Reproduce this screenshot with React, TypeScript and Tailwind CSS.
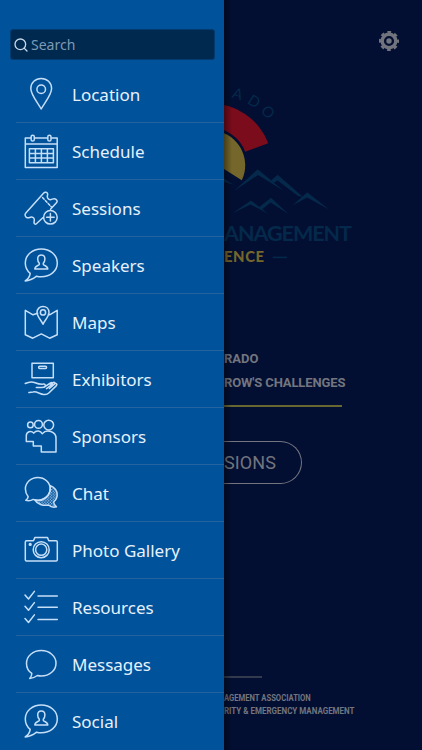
import type { ReactNode } from 'react'
import { Search } from 'lucide-react'

const BUBBLE = 'M7.2 26.4C4 23.8 2.3 20.2 2.3 16 2.3 8 9.4 2 18.3 2s16 6 16 14-7.100 13.800-16 13.800c-1.600 0-3.200-.200-4.700-.600C10.600 31.600 6.500 33.800 2.200 34c2.800-1.800 4.600-4.200 5-7.600z'
const PERSON = 'M16.300 16.200c-1-1.200-1.600-2.600-1.600-4.300 0-2.400 1.400-4 3.600-4s3.600 1.600 3.600 4c0 1.700-.6 3.100-1.600 4.300v1.300c0 .8 4.500.9 4.500 4.600h-13c0-3.700 4.500-3.800 4.500-4.600z'

function SpeakerIcon() {
  return (
    <>
      <path d={BUBBLE} />
      <path d={PERSON} />
    </>
  )
}

function CheckRow({ y }: { y: number }) {
  return <path d={`M2 ${y - 1}l3.500 4L11.400 ${y - 4.6}M15 ${y}h19.300`} />
}

const items: { label: string; icon: ReactNode }[] = [
  {
    label: 'Location',
    icon: (
      <>
        <path d="M18.200 33C15 27 7.800 18.800 7.800 12.500 7.800 6.600 12.400 2.500 18.200 2.500s10.400 4.100 10.400 10C28.600 18.800 21.400 27 18.200 33z" />
        <circle cx="18.200" cy="13.200" r="4.300" />
      </>
    ),
  },
  {
    label: 'Schedule',
    icon: (
      <>
        <path d="M7.800 5H2.300v29.600h31.900V5h-5.500M11.600 5h12.900M2.300 11.100h31.900" />
        <rect x="8.100" y="2.200" width="3.200" height="5.800" rx="1.600" />
        <rect x="24.800" y="2.200" width="3.200" height="5.800" rx="1.600" />
        <path d="M6.400 15.800h24v14h-24zM12.400 15.800v14M18.400 15.800v14M24.400 15.800v14M6.400 20.500h24M6.400 25.100h24" />
      </>
    ),
  },
  {
    label: 'Sessions',
    icon: (
      <>
        <path d="M19.800 27.800l-6.400 6c-.8.7-2 .3-2.300-.7-.3-1.200.4-2.300.2-3.600-.3-1.900-2.200-2.800-3.900-2.300-1.200.4-2.200 1-3.300.5-1.800-.8-2.700-3.200-1.500-4.400L20.500 3.200c1.100-1.100 3-1.300 3.900-.1.800 1.100-.2 2.300-.1 3.700.1 1.900 1.900 3.200 3.800 2.800 1.300-.3 2.200-1.300 3.600-.8 1.900.6 3.200 2.400 2 3.600l-6.200 6.800" />
        <path d="M19.500 7.500l9 9.500" strokeDasharray="2.400 1.700" />
        <circle cx="27.400" cy="27.300" r="6.800" />
        <path d="M27.400 23.500v7.600M23.600 27.300h7.600" />
      </>
    ),
  },
  { label: 'Speakers', icon: <SpeakerIcon /> },
  {
    label: 'Maps',
    icon: (
      <>
        <path d="M14.700 9.200l-4.700 1.600-7.700-4.500v24.400l7.500 3.500 8.500-4.300 8.300 4.300 7.600-3.500V6.300l-7.600 4.500-1.200-.6" />
        <path d="M20 20.300c-1.500-3.800-6-7.900-6-11.800 0-3.600 2.600-6.100 6-6.100s6 2.500 6 6.100c0 3.900-4.500 8-6 11.800z" />
        <circle cx="20" cy="8.400" r="2.600" />
      </>
    ),
  },
  {
    label: 'Exhibitors',
    icon: (
      <>
        <rect x="9" y="2.300" width="21.300" height="14.400" />
        <rect x="15.600" y="5.200" width="8" height="2.200" rx="1.100" />
        <path d="M2.200 22.500c3.600-1.800 7-2.100 10-.8 2.500 1.100 5 1.700 8.500 1.400 2.200-.2 2.200 2.800 0 3.100-2.700.5-4.900.5-7.400.3" />
        <path d="M21.500 25.800l6-3.800c1.600-1 3 .2 1.700 1.400l-5.700 4.200M27 23l3-1.400c1.700-.7 2.700.6 1.400 1.700l-5 4.200M31.600 22.900c2-.8 2.900.4 1.800 1.700l-7.300 7.200c-1.500 1.500-3.200 2-5.400 1.700-3.700-.4-6.500-3-10.500-2.600-1.600.1-2.700.5-4.300.7" />
      </>
    ),
  },
  {
    label: 'Sponsors',
    icon: (
      <>
        <circle cx="7.400" cy="6.900" r="2.800" />
        <circle cx="15.500" cy="6.400" r="3.900" />
        <circle cx="25.700" cy="7.100" r="4.900" />
        <path d="M3.300 23.500v-5.700c0-4.400 4.800-5.500 7.400-2.700 2.500-3.200 7-2.700 8.500.7 4.600-5.200 13.800-2.300 13.800 4.400V34H18.300v-6h-8v-4.500z" />
      </>
    ),
  },
  {
    label: 'Chat',
    icon: (
      <>
        <path fill="url(#dots)" d="M27.400 10.600c4.100 1.800 6.800 5.200 6.800 9.100 0 2.900-1.400 5.400-3.600 7.300.2 2 1.300 3.700 2.900 4.800-3.200.8-5.800.2-8-1.800-5.400 1.100-11.300-1-13.600-4.900C19.800 27 27.900 21.600 27.400 10.600z" />
        <path d="M5.200 21.700C3.400 19.600 2.400 16.700 2.400 14c0-6.500 5.600-11.600 12.400-11.600s12.400 5 12.400 11.400-5.600 11.400-12.400 11.400c-1.700 0-3.200-.3-4.600-.8-2.100 1.300-4.800 1.600-7.500.9 1.300-.7 2.300-1.900 2.500-3.600z" />
      </>
    ),
  },
  {
    label: 'Photo Gallery',
    icon: (
      <>
        <path d="M3.500 8.800h7l1.300-3.200h12.700l1.300 3.200h7.300c.8 0 1.200.5 1.200 1.200v17.800c0 .8-.5 1.200-1.200 1.200H3.500c-.8 0-1.200-.5-1.200-1.200V10c0-.8.500-1.200 1.200-1.200z" />
        <circle cx="18.200" cy="17.700" r="8" />
        <circle cx="18.200" cy="17.700" r="5.600" />
        <circle cx="7.200" cy="12.400" r=".9" fill="currentColor" />
      </>
    ),
  },
  {
    label: 'Resources',
    icon: (
      <>
        <CheckRow y={7} />
        <CheckRow y={18.2} />
        <CheckRow y={30.5} />
      </>
    ),
  },
  {
    label: 'Messages',
    icon: (
      <path d="M8.800 27.400C5.500 25.200 3.500 21.600 3.500 17.400 3.500 10 10 4.600 18.200 4.600S33 10 33 17.200s-6.500 12.800-14.800 12.800c-1.300 0-2.600-.2-3.800-.5-2.200 1.600-4.600 2.700-7.700 3 1.500-1.500 2.200-3.100 2.100-5.100z" />
    ),
  },
  { label: 'Social', icon: <SpeakerIcon /> },
]

function MenuRow({ label, icon }: { label: string; icon: ReactNode }) {
  return (
    <li className="ml-4 h-[57px] shrink-0 border-b border-[#24639f] last:border-transparent pl-[7px] flex items-center">
      <svg
        viewBox="0 0 36 36"
        className="w-9 h-9 shrink-0 text-[#c6dff8]"
        fill="none"
        stroke="currentColor"
        strokeWidth="1.500"
        strokeLinejoin="round"
        strokeLinecap="round"
      >
        {icon}
      </svg>
      <span className="ml-[13px] pt-[2px] text-[17px] leading-6 text-[#e6f1fc] whitespace-nowrap">{label}</span>
    </li>
  )
}

function Drawer() {
  return (
    <aside className="w-[224px] h-full shrink-0 overflow-hidden bg-[#00529b] flex flex-col font-['Noto_Sans',sans-serif]">
      <div className="mt-[29px] ml-[10px] mr-[9px] h-[31px] shrink-0 rounded-[3px] border border-[#033a70] bg-[#00294f] flex items-center pl-[2px]">
        <Search className="w-4 h-4 text-[#c5d9ec]" strokeWidth={2} />
        <span className="ml-[2px] text-[14px] leading-5 text-[#7d9ab5]">Search</span>
      </div>
      <svg width="0" height="0" className="absolute">
        <defs>
          <pattern id="dots" width="2.800" height="2.800" patternUnits="userSpaceOnUse">
            <circle cx=".7" cy=".7" r=".65" fill="#c6dff8" />
            <circle cx="2.100" cy="2.100" r=".65" fill="#c6dff8" />
          </pattern>
        </defs>
      </svg>
      <ul className="mt-[6px] flex flex-col">
        {items.map((item) => (
          <MenuRow key={item.label} {...item} />
        ))}
      </ul>
    </aside>
  )
}

function Gear() {
  return (
    <svg viewBox="0 0 20 20" className="w-5 h-5 text-[#71737d]" fill="none" stroke="currentColor">
      <circle cx="10" cy="10" r="6.800" strokeWidth="3.400" />
      <circle cx="10" cy="10" r="9" strokeWidth="2.200" strokeDasharray="3.700 3.368" strokeDashoffset="1.850" />
      <circle cx="10" cy="10" r="2.700" fill="currentColor" stroke="none" />
    </svg>
  )
}

function Logo() {
  return (
    <svg viewBox="224 80 140 190" className="w-[140px] h-[190px] font-['Lato',sans-serif]">
      <g fill="#04294b" fontSize="15">
        <text transform="translate(231.200 97.200) rotate(18)">A</text>
        <text transform="translate(246.500 102.800) rotate(32)">D</text>
        <text transform="translate(260 111.500) rotate(45)">O</text>
      </g>
      <path d="M210 103.500A61.500 61.500 0 0 1 268.300 143.200L245.200 151.700A36.500 36.500 0 0 0 210 128z" fill="#7b0c1b" />
      <path d="M210 130.300A35 35 0 0 1 241.800 180.300L210 160z" fill="#75672b" />
      <g fill="#04294b">
        <path d="M234 191L257.700 169.300 284 191 258 175z" />
        <path d="M271 180.500L277.700 174.800 303 197 298 196 277.500 180.500 273.500 183z" />
        <path d="M292.500 205.500L307.300 192.300 329 209.500 307 197.500z" />
        <path d="M232 213.500L251 200.500 268.500 214 250.500 204.500z" />
        <path d="M258.500 207.500L271 197.800 288.500 214 270.500 202.500 262 209.500z" />
        <path d="M224 178.500l9 6-9-2.500z" />
      </g>
      <text x="224" y="241.300" fontSize="21.500" fontWeight="700" fill="#04294b" textLength="128">ANAGEMENT</text>
      <text x="224" y="262.300" fontSize="14.800" fontWeight="900" fill="#75672b" textLength="40">ENCE</text>
      <path d="M272.700 257.400h14.300" stroke="#04294b" strokeWidth="1.500" />
    </svg>
  )
}

function HomePage() {
  return (
    <main className="relative flex-1 min-w-0 h-full overflow-hidden bg-[#020f32] text-[#73757f] flex flex-col items-start font-['Roboto',sans-serif] whitespace-nowrap">
      <div className="mt-[31px] mr-[23px] self-end h-5">
        <Gear />
      </div>
      <div className="mt-[29px] h-[190px]">
        <Logo />
      </div>
      <div className="mt-[77px] text-[13px] leading-6 font-bold">
        <p>RADO</p>
        <p className="tracking-[-0.120px]">ROW&apos;S CHALLENGES</p>
      </div>
      <div className="mt-[10px] w-[118px] h-[2px] bg-[#6a6831]" />
      <div className="mt-[34px] w-[78px] h-[43px] rounded-r-full border border-l-0 border-[#73757f] flex items-center text-[18px] tracking-[0.100px]">
        SIONS
      </div>
      <div className="mt-[192px] w-[38px] h-[2px] bg-[#343a4e]" />
      <div className="mt-[14px] text-[9.500px] leading-[12.500px] font-bold">
        <p className="origin-left scale-x-[0.805]">AGEMENT ASSOCIATION</p>
        <p className="origin-left scale-x-[0.840]">RITY &amp; EMERGENCY MANAGEMENT</p>
      </div>
      {/* shadow cast by the open drawer */}
      <div className="absolute inset-y-0 left-0 w-2 bg-gradient-to-r from-black/40 to-transparent" />
    </main>
  )
}

export default function App() {
  return (
    <div className="w-[422px] h-[750px] overflow-hidden bg-[#020f32] flex">
      <Drawer />
      <HomePage />
    </div>
  )
}
